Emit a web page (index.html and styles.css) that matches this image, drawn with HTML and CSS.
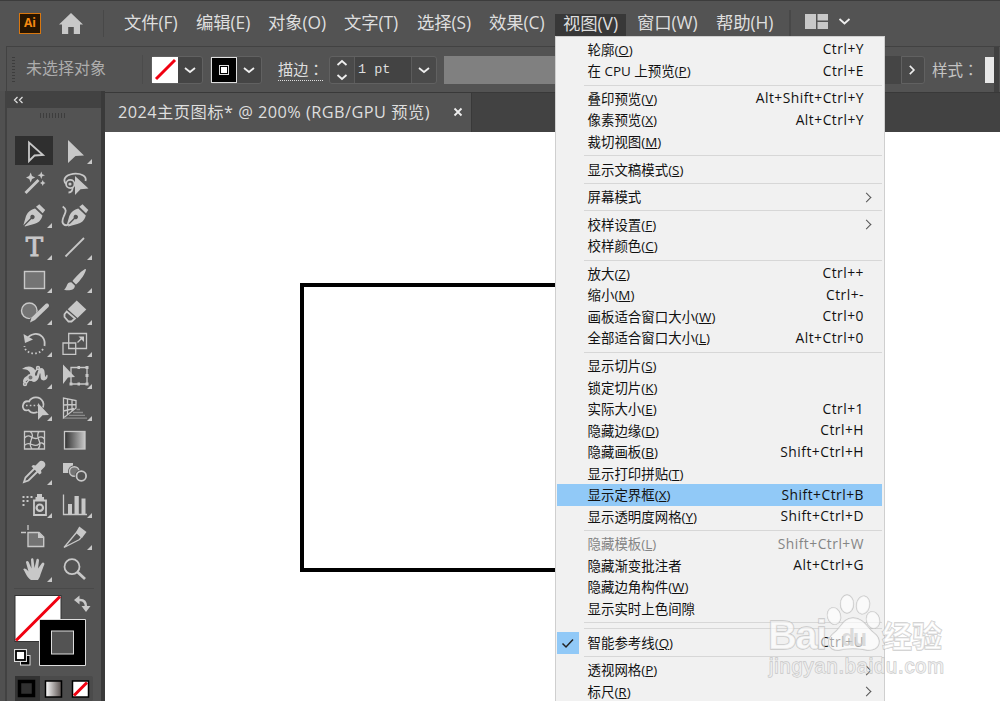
FILE: index.html
```html
<!DOCTYPE html>
<html lang="zh-CN">
<head>
  <meta charset="UTF-8">
  <meta name="viewport" content="width=device-width, initial-scale=1.0">
  <title>2024主页图标</title>
  <link rel="stylesheet" href="styles.css">
</head>
<body>
  <div class="app">
    <!-- Menu bar -->
    <header class="menubar">
      <div class="logo">Ai</div>
      <svg class="home" viewBox="0 0 24 22"><path d="M12 0L24 11.5H21V21H14.8V14H9.2V21H3V11.5H0Z"/></svg>
      <nav class="menus">
        <span>文件(F)</span>
        <span>编辑(E)</span>
        <span>对象(O)</span>
        <span>文字(T)</span>
        <span>选择(S)</span>
        <span>效果(C)</span>
        <span class="open">视图(V)</span>
        <span>窗口(W)</span>
        <span>帮助(H)</span>
      </nav>
      <svg class="workspace" viewBox="0 0 46 16"><path class="solid" d="M0 0H11V15H0ZM12.5 0H23V6.5H12.5ZM12.5 8H23V15H12.5Z"/><path class="chev" d="M34.5 5L39.5 9.5L44.500 5"/></svg>
    </header>

    <!-- Control bar -->
    <div class="controls">
      <div class="grip"></div>
      <span class="status">未选择对象</span>
      <div class="swatch">
        <svg class="chip" viewBox="0 0 26 26"><rect width="26" height="26" fill="#fff"/><path d="M4 22L23 3" stroke="#f00010" stroke-width="3"/></svg>
        <svg class="drop" viewBox="0 0 24 26"><path d="M7 11L12 15L17 11"/></svg>
      </div>
      <div class="swatch second">
        <svg class="chip" viewBox="0 0 26 26"><rect x=".5" y=".5" width="25" height="25" fill="#000" stroke="#ddd"/><rect x="8.500" y="8.500" width="9" height="9" fill="none" stroke="#ddd"/><rect x="10" y="10" width="6" height="6" fill="#fff"/></svg>
        <svg class="drop" viewBox="0 0 24 26"><path d="M7 11L12 15L17 11"/></svg>
      </div>
      <span class="stroke-label">描边<span class="colon" lang="zh-TW">：</span></span>
      <div class="weight">
        <svg class="spin" viewBox="0 0 24 26"><path d="M7.500 8L12 4L16.500 8M7.500 18L12 22L16.500 18"/></svg>
        <span class="value">1 pt</span>
        <svg class="drop" viewBox="0 0 24 26"><path d="M7 11L12 15L17 11"/></svg>
      </div>
      <div class="profile"></div>
      <svg class="more" viewBox="0 0 24 26"><path d="M8.500 8.500L13 13L8.500 17.500"/></svg>
      <span class="style-label">样式<span class="colon" lang="zh-TW">：</span></span>
      <div class="style-chip"></div>
      <div class="edge"></div>
    </div>

    <div class="workarea">
      <!-- Tools panel -->
      <aside class="tools">
        <div class="collapse"><svg viewBox="0 0 12 8"><path d="M4.500 1L1.500 4L4.500 7M9.500 1L6.500 4L9.500 7"/></svg></div>
        <div class="panel-grip"></div>
        <div class="tool-grid">
          <svg class="active" viewBox="0 0 40 32"><path class="line" d="M15 7.500V26L20.500 20.500L29 20Z"/></svg>
          <svg viewBox="0 0 40 32"><path d="M14 5L30 20.500L21.500 21L14 28Z"/><path d="M33 29H38V24Z"/></svg>

          <svg viewBox="0 0 40 32"><path class="line thick" d="M11.500 26L24.500 13"/><path d="M16.700 5.500L18 9L21.200 10.500L18 12L16.700 15.500L15.200 12L12 10.500L15.200 9ZM27.300 4.500L28.300 7.200L31 8.200L28.300 9.200L27.300 12L26.200 9.200L23.500 8.200L26.200 7.200ZM28.800 13L29.600 15L31.500 16L29.600 17L28.800 19L27.800 17L26 16L27.800 15Z"/></svg>
          <svg viewBox="0 0 40 32"><path class="line" d="M12 17C8.500 13 11 8 19 6.800C27 6 33 9 31.500 14"/><circle class="line" cx="16.300" cy="17" r="4.200"/><circle cx="16" cy="17" r="1.600"/><path class="line" d="M18.500 20C19 23 17.500 25.500 14.500 25.500"/><path d="M21 9L34.500 21.500L26.500 22.200L21 28Z"/></svg>

          <svg viewBox="0 0 40 32"><path d="M9.300 26.500L12 17C14 12.500 17 10.500 21 9.500L28.500 16.500C27 22 24 24 20 25L11 27.500L10.500 26.900L17.500 20A2.200 2.200 0 1 0 16.500 19L9.700 26Z"/><path d="M25.300 5.300L31.200 11L28.700 14.200L22 7.800Z"/><path d="M33 29H38V24Z"/></svg>
          <svg viewBox="0 0 40 32"><path class="line" d="M8.700 7.500C14 11 11 14 9.500 18C6.500 25 11 28 15.500 25"/><path d="M12.600 26.500L15.300 17C17.300 12.500 20.300 10.500 24.300 9.500L31.800 16.500C30.300 22 27.300 24 23.300 25L14.300 27.500L13.800 26.900L20.800 20A2.200 2.200 0 1 0 19.800 19L13 26Z"/><path d="M28.500 5.300L34.300 11L32 14.200L25.300 7.800Z"/></svg>

          <svg viewBox="0 0 40 32"><text x="20.300" y="25.300">T</text><path d="M33 29H38V24Z"/></svg>
          <svg viewBox="0 0 40 32"><path class="line" d="M11.500 25.500L30 7"/><path d="M33 29H38V24Z"/></svg>

          <svg viewBox="0 0 40 32"><rect class="box" x="10.500" y="7.500" width="20" height="17"/><path d="M33 29H38V24Z"/></svg>
          <svg viewBox="0 0 40 32"><path d="M32 5C29 5 21 13.500 18.500 17L22 20.500C26 17 32 9 32 5ZM17.300 18.200C12 18 13.500 23.500 10 25.500C14 27.500 21.500 26 20.800 21.500Z"/><path d="M33 29H38V24Z"/></svg>

          <svg viewBox="0 0 40 32"><circle class="box" cx="15.300" cy="14.800" r="7.800"/><path class="back" d="M15 28L35 9"/><path d="M16 26.500L17.500 21.500L31.500 8C34 6.500 36 9 34.500 11L21 24Z"/><path d="M33 29H38V24Z"/></svg>
          <svg viewBox="0 0 40 32"><path d="M22.700 4.500L32.300 13.600L23.500 22L13.700 13.200Z"/><path class="line" d="M12.700 15.500L21 22.500L17.500 25.500H14.500L10.500 21V18.200Z"/><path d="M33 29H38V24Z"/></svg>

          <svg viewBox="0 0 40 32"><path class="line" d="M13 11C16 5.500 24 4 28.500 9C31 12 31 14.500 30.500 18"/><path d="M9.500 6L11 15L19 11.500Z"/><path class="line dots" d="M29 21C26 26 17 27 12.500 22.500C11 21 10.700 20 10.500 18"/><path d="M33 29H38V24Z"/></svg>
          <svg viewBox="0 0 40 32"><path class="line thin" d="M14.700 5.500H32.500V20.500H14.700ZM9 15H21.700V26.400H9ZM23.500 14.500L27.500 10.500"/><path d="M24.500 8.500H30V14Z"/><path d="M33 29H38V24Z"/></svg>

          <svg viewBox="0 0 40 32"><path d="M8 9C13 5 19 6 21 10C22 13 20 15 22 16C24 15 23 9 27 8C32 8 30 15 31.500 17C32.500 16 32 14 33.500 15C34.500 20 29 22 27 19C26 17 27 14 26 13C25 16 25 21 20 22C17 22 17 19 14 20C11 21 12 24 9 22C9 17 13 16 16 15C17 12 14 9 8 9Z"/><path class="line thin" d="M12 24L23 9"/><circle class="box" cx="16.500" cy="17.500" r="2.700"/><circle class="box" cx="11" cy="24" r="1.500"/><circle class="box" cx="24" cy="8" r="1.500"/><path d="M33 29H38V24Z"/></svg>
          <svg viewBox="0 0 40 32"><path class="line thin" d="M17 7.500H33V24H17Z"/><path d="M15.500 22.500H18.500V25.500H15.500ZM23.500 6H26V9H23.500ZM31.500 6H34.500V9H31.500ZM31.500 14H34.500V17H31.500ZM31.500 22.500H34.500V25.500H31.500ZM23.500 22.500H26V25.500H23.500Z"/><path d="M9 4.500L21 17L14 17.500L9 24Z"/><path d="M33 29H38V24Z"/></svg>

          <svg viewBox="0 0 40 32"><path class="line" d="M23.500 20C19 22 16 20 14.500 18C10 19.500 8 16 9 13C10 9.500 13 9 15 9.500C18 4 26 4 29 10C30 12 29.500 14 29 15.500"/><path class="line thin dots" d="M12 13.500H24"/><path d="M24 11L35 23L28.500 23.300L24 28Z"/><path d="M33 29H38V24Z"/></svg>
          <svg viewBox="0 0 40 32"><path class="line thin" d="M9.500 6V26L22 16V8.500ZM13.500 7V22.500M18 8V19M9.500 13L22 12.500M9.500 19L20 16.500"/><path class="line faint" d="M22.500 17.500H26M19 20.500H29M15 23.300H31M10 26.200H33"/><path d="M33 29H38V24Z"/></svg>

          <svg viewBox="0 0 40 32"><path class="line thin" d="M10.500 7.500H30.500V25H10.500ZM10.500 14C16 8 18 17 24 14C27 12 29 13 30.500 15M11 21C16 16 20 25 25 20C27 18 29 19 30.500 21M16 7.500C23 12 12 18 18 25M25 7.500C20 14 30 18 24 25"/></svg>
          <svg viewBox="0 0 40 32"><defs><linearGradient id="fade"><stop stop-color="#303030"/><stop offset="1" stop-color="#c8c8c8"/></linearGradient></defs><rect x="10.500" y="7.500" width="20.500" height="17.500" fill="url(#fade)" stroke="#c8c8c8" stroke-width="1.300"/></svg>

          <svg viewBox="0 0 40 32"><path class="line" d="M21 12L11.500 21.500L10 26L14.500 24.500L24 15"/><path d="M19 9L21.500 9.500L25 6C28 2.500 33.500 7.500 30.500 11L27 14.500L27.500 17L25.500 18.500L17.500 10.500Z"/><path d="M33 29H38V24Z"/></svg>
          <svg viewBox="0 0 40 32"><path d="M9 7H19V17H9Z"/><circle class="gap" cx="20.300" cy="15.500" r="6.300"/><circle class="box" cx="20.300" cy="15.500" r="4.800"/><circle class="gap" cx="27.300" cy="20" r="6.500"/><circle class="line" cx="27.300" cy="20" r="4.800"/></svg>

          <svg viewBox="0 0 40 32"><path d="M8.500 7H10.500V9H8.500ZM12.500 7H14.500V9H12.500ZM16.500 7H18.500V9H16.500ZM8.500 11H10.500V13H8.500ZM12.500 11H14.500V13H12.500ZM8.500 15H10.500V17H8.500ZM23 5H28V8H30V11H21.500V8H23Z"/><path class="line" d="M20 11.500H32V26H20Z"/><circle class="line ring" cx="25.800" cy="18.700" r="3.200"/><path d="M33 29H38V24Z"/></svg>
          <svg viewBox="0 0 40 32"><path class="line thin" d="M9.500 5.500V25.500H33"/><path d="M14 15H18V26H14ZM20.500 7H24.800V26H20.500ZM27.500 9.500H31.500V26H27.500Z"/><path d="M33 29H38V24Z"/></svg>

          <svg viewBox="0 0 40 32"><path class="line thin" d="M14 4V9M7 11.500H12"/><path class="box" d="M14 11.500H25L29.700 16V25.500H14Z"/><path d="M24 11V17H30Z"/></svg>
          <svg viewBox="0 0 40 32"><path class="line thin" d="M22.500 11.500L10 26.500L25.500 18.500L27.500 16Z"/><path d="M25.300 5.500L32.500 11L28 17L22 11Z"/><path d="M33 29H38V24Z"/></svg>

          <svg viewBox="0 0 40 32"><path d="M17 27C13 25 11.500 19 9.300 16.500C10 14.500 12.500 16 14.500 18.500L12 9.500C12 7.500 14 7.500 14.700 9L17.500 15.500L17 6.500C17.500 4.500 19.300 5 19.500 6.500L20.500 15L22.500 6.500C23 5 25 5.500 25 7.500L24 15.500L28 10C29 8.500 31 10 30.300 11.500C29 14 28 18 26.500 21.500C26 24 25 25 24 27Z"/><path d="M33 29H38V24Z"/></svg>
          <svg viewBox="0 0 40 32"><circle class="line" cx="18" cy="13.700" r="7.500"/><path class="line thick" d="M23.500 19L31 26"/></svg>
        </div>

        <!-- Fill and stroke indicators -->
        <svg class="colors" viewBox="0 0 80 116">
          <path d="M0 3.500H80" stroke="#494949"/>
          <rect x="1" y="10.500" width="46" height="46" fill="#fff" stroke="#333"/>
          <path d="M2 55.500L46 11.500" stroke="#f00010" stroke-width="3"/>
          <path d="M25.500 34.500H71.500V80.500H25.500Z" fill="#000" stroke="#ddd"/>
          <rect x="37.500" y="46" width="22" height="23" fill="#535353" stroke="#ddd"/>
          <path d="M63 15H66C71 15 72 18 72 22" fill="none" stroke="#c8c8c8" stroke-width="2.500"/>
          <path d="M60 15L65.500 10.500V19.500ZM67.500 21H76.500L72 27Z" fill="#c8c8c8"/>
          <rect x="6.500" y="70.500" width="9.500" height="9.500" fill="#000" stroke="#ddd"/>
          <rect x="1.500" y="65.500" width="10" height="10" fill="#fff" stroke="#ddd" stroke-width="3"/>
          <rect x="2" y="66" width="9" height="9" fill="#fff" stroke="#000" stroke-width="1.800"/>
          <rect x="1" y="91" width="78" height="25" rx="2" fill="#4b4b4b"/>
          <rect x="1" y="91" width="25" height="25" fill="#333"/>
          <rect x="5.500" y="96.500" width="14" height="14" fill="#303030" stroke="#000" stroke-width="3.500"/>
          <rect x="31.500" y="96" width="16" height="16" fill="url(#shade)" stroke="#000" stroke-width="1.500"/>
          <rect x="58.500" y="96" width="16" height="16" fill="#fff" stroke="#000" stroke-width="1.500"/>
          <path d="M60 110.500L73 97.500" stroke="#f00010" stroke-width="3"/>
          <defs><linearGradient id="shade"><stop stop-color="#fff"/><stop offset="1" stop-color="#564e4c"/></linearGradient></defs>
        </svg>
      </aside>

      <main class="document">
        <div class="tabs">
          <div class="tab"><span class="tab-title">2024主页图标* @ 200% (RGB/GPU 预览)</span><svg viewBox="0 0 10 10"><path d="M1.500 1.500L8.500 8.500M8.500 1.500L1.500 8.500"/></svg></div>
        </div>
        <div class="canvas"><div class="artboard-rect"></div></div>
      </main>
    </div>

    <!-- View menu -->
    <ul class="dropdown">
      <li><span>轮廓(<u>O</u>)</span><kbd>Ctrl+Y</kbd></li>
      <li><span>在 CPU 上预览(<u>P</u>)</span><kbd>Ctrl+E</kbd></li>
      <li class="sep"></li>
      <li><span>叠印预览(<u>V</u>)</span><kbd>Alt+Shift+Ctrl+Y</kbd></li>
      <li><span>像素预览(<u>X</u>)</span><kbd>Alt+Ctrl+Y</kbd></li>
      <li><span>裁切视图(<u>M</u>)</span></li>
      <li class="sep"></li>
      <li><span>显示文稿模式(<u>S</u>)</span></li>
      <li class="sep"></li>
      <li class="sub"><span>屏幕模式</span></li>
      <li class="sep"></li>
      <li class="sub"><span>校样设置(<u>F</u>)</span></li>
      <li><span>校样颜色(<u>C</u>)</span></li>
      <li class="sep"></li>
      <li><span>放大(<u>Z</u>)</span><kbd>Ctrl++</kbd></li>
      <li><span>缩小(<u>M</u>)</span><kbd>Ctrl+-</kbd></li>
      <li><span>画板适合窗口大小(<u>W</u>)</span><kbd>Ctrl+0</kbd></li>
      <li><span>全部适合窗口大小(<u>L</u>)</span><kbd>Alt+Ctrl+0</kbd></li>
      <li class="sep"></li>
      <li><span>显示切片(<u>S</u>)</span></li>
      <li><span>锁定切片(<u>K</u>)</span></li>
      <li><span>实际大小(<u>E</u>)</span><kbd>Ctrl+1</kbd></li>
      <li><span>隐藏边缘(<u>D</u>)</span><kbd>Ctrl+H</kbd></li>
      <li><span>隐藏画板(<u>B</u>)</span><kbd>Shift+Ctrl+H</kbd></li>
      <li><span>显示打印拼贴(<u>T</u>)</span></li>
      <li class="hover"><span>显示定界框(<u>X</u>)</span><kbd>Shift+Ctrl+B</kbd></li>
      <li><span>显示透明度网格(<u>Y</u>)</span><kbd>Shift+Ctrl+D</kbd></li>
      <li class="sep"></li>
      <li class="disabled"><span>隐藏模板(<u>L</u>)</span><kbd>Shift+Ctrl+W</kbd></li>
      <li><span>隐藏渐变批注者</span><kbd>Alt+Ctrl+G</kbd></li>
      <li><span>隐藏边角构件(<u>W</u>)</span></li>
      <li><span>显示实时上色间隙</span></li>
      <li class="sep"></li>
      <li class="sep"></li>
      <li class="checked"><svg class="check" viewBox="0 0 22 22"><path d="M5.500 11.500L9 15L16 7.500"/></svg><span>智能参考线(<u>Q</u>)</span><kbd>Ctrl+U</kbd></li>
      <li class="sep"></li>
      <li class="sub"><span>透视网格(<u>P</u>)</span></li>
      <li class="sub"><span>标尺(<u>R</u>)</span></li>
    </ul>

    <svg class="watermark" viewBox="0 0 190 95">
      <g>
        <ellipse cx="70" cy="26" rx="6.500" ry="8.500" transform="rotate(-15 70 26)"/>
        <ellipse cx="83" cy="14" rx="6.500" ry="9"/>
        <ellipse cx="99" cy="15" rx="6.500" ry="9" transform="rotate(10 99 15)"/>
        <ellipse cx="109" cy="30" rx="6.500" ry="8.500" transform="rotate(-15 109 30)"/>
        <path d="M89 28C79 28 77 38 70 43C61 50 64 61 75 60C84 58 93 58 103 60C117 61 118 49 110 43C103 38 100 28 89 28Z"/>
      </g>
      <text class="brand" x="4" y="59" textLength="59">Bai</text>
      <text class="du" x="77" y="56" textLength="26">du</text>
      <text class="brand cn" x="118" y="57" textLength="60">经验</text>
      <text class="site" x="5" y="83" textLength="175">jingyan.baidu.com</text>
    </svg>
  </div>
</body>
</html>
```
FILE: styles.css
```css
* {
  box-sizing: border-box;
}

body {
  margin: 0;
  width: 1000px;
  height: 701px;
  overflow: hidden;
  background: #535353;
  color: #dedede;
  font-family: "Open Sans", "Noto Sans CJK SC", sans-serif;
}

svg {
  display: block;
  flex: none;
}

.app {
  position: relative;
  display: flex;
  flex-direction: column;
  width: 1000px;
  height: 701px;
  overflow: hidden;
}

/* Menu bar */
.menubar {
  display: flex;
  align-items: center;
  flex: none;
  height: 46px;
  padding-left: 19px;
  border-top: 1px solid #3c3c3c;
}

.logo {
  width: 22px;
  height: 21px;
  border: 1.5px solid #d9770f;
  background: #261400;
  color: #f58a12;
  font-size: 12px;
  font-weight: bold;
  line-height: 18px;
  text-align: center;
}

.home {
  width: 24px;
  height: 22px;
  margin-left: 18px;
  fill: #c8c8c8;
}

.menus {
  display: grid;
  grid-template-columns: 72px 72px 76px 73px 72px 74px 74px 79px 73px;
  align-items: center;
  height: 27px;
  margin-left: 20px;
  padding-left: 20px;
  border-left: 1px solid #484848;
  border-right: 2px solid #484848;
  font-size: 17.4px;
  letter-spacing: -0.1px;
  line-height: 22px;
  white-space: nowrap;
}

.menus span {
  padding-bottom: 4px;
}

.menus .open {
  width: 71px;
  height: 23px;
  margin: 4px 0 0 -8px;
  padding: 0 0 0 8px;
  background: #383838;
  line-height: 18px;
}

.workspace {
  width: 46px;
  height: 16px;
  margin: -4px 0 0 14px;
}

.workspace .solid {
  fill: #c8c8c8;
}

.workspace .chev,
.drop path,
.spin path,
.more path {
  fill: none;
  stroke: #eee;
  stroke-width: 1.8;
}

/* Control bar */
.controls {
  display: flex;
  align-items: center;
  flex: none;
  height: 46px;
  margin-left: 6px;
  border-top: 1px solid #424242;
  border-left: 1px solid #424242;
  font-size: 16px;
  white-space: nowrap;
}

.grip {
  width: 3px;
  height: 26px;
  margin-left: 5px;
  background: repeating-linear-gradient(#3d3d3d 0 1px, transparent 1px 3px);
}

.status {
  width: 117px;
  margin-left: 11px;
  padding-bottom: 5px;
  border-right: 1px solid #4b4b4b;
  color: #adadad;
}

.swatch {
  display: flex;
  width: 52px;
  height: 28px;
  margin-left: 8px;
  border: 1px solid #616161;
  border-radius: 3px;
  background: #454545;
}

.swatch.second {
  margin-left: 7px;
}

.chip {
  width: 26px;
  height: 26px;
}

.drop,
.spin,
.more {
  width: 24px;
  height: 26px;
}

.stroke-label {
  width: 45px;
  margin-left: 16px;
  border-bottom: 1px dotted #ddd;
  font-size: 15.2px;
  line-height: 21px;
}

.colon {
  font-family: "Noto Sans CJK TC", sans-serif;
}

.weight {
  display: flex;
  width: 108px;
  height: 28px;
  margin-left: 6px;
  border: 1px solid #616161;
  border-radius: 3px;
  background: #4a4a4a;
}

.value {
  width: 59px;
  padding-left: 3px;
  border-left: 1px solid #5c5c5c;
  border-right: 1px solid #5c5c5c;
  background: #434343;
  font-family: "Liberation Mono", monospace;
  font-size: 13.5px;
  line-height: 25px;
}

.profile {
  width: 457px;
  height: 28px;
  margin-left: 7px;
  background: linear-gradient(90deg, #808080 0 400px, #454545 400px);
}

.more {
  height: 28px;
  border: 1px solid #616161;
  border-radius: 0 3px 3px 0;
  background: #4a4a4a;
}

.style-label {
  width: 48px;
  margin-left: 7px;
  color: #c4c4c4;
  font-size: 15.5px;
}

.style-chip {
  width: 9px;
  height: 26px;
  margin-left: 5px;
  background: #e8e8e8;
}

.edge {
  width: 5px;
  height: 46px;
  background: #404040;
}

/* Tools panel */
.workarea {
  display: flex;
  flex: 1;
  min-height: 0;
}

.tools {
  width: 105px;
  flex: none;
  margin-top: -1px;
  padding-left: 6px;
  border-right: 4px solid #3a3a3a;
  background: linear-gradient(90deg, #505050 5px, #424242 5px 7px, #535353 7px);
}

.collapse {
  height: 17px;
  padding: 5px 0 0 7px;
  background: #424242;
}

.collapse svg {
  width: 12px;
  height: 8px;
  fill: none;
  stroke: #ddd;
  stroke-width: 1.3;
}

.panel-grip {
  width: 26px;
  height: 5px;
  margin: 5px 0 0 34px;
  background: repeating-linear-gradient(90deg, #3d3d3d 0 1px, transparent 1px 3px);
}

.tool-grid {
  display: grid;
  grid-template-columns: 40px 40px;
  grid-auto-rows: 32.15px;
  margin: 17px 0 0 8px;
}

.tool-grid svg {
  width: 40px;
  height: 32px;
  fill: #c8c8c8;
}

.tool-grid .active {
  background: linear-gradient(#2f2f2f, #2f2f2f) 1px 1px / 38px 29px no-repeat;
}

.tool-grid .line {
  fill: none;
  stroke: #c8c8c8;
  stroke-width: 1.8;
}

.tool-grid .thin {
  stroke-width: 1.3;
}

.tool-grid .faint {
  stroke: #8c8c8c;
  stroke-width: 1.3;
}

.tool-grid .ring {
  stroke-width: 2.2;
}

.tool-grid .thick {
  stroke-width: 2.8;
}

.tool-grid .dots {
  stroke-dasharray: 1.6 2.2;
}

.tool-grid .box {
  fill: #747474;
  stroke: #c8c8c8;
  stroke-width: 1.4;
}

.tool-grid .gap {
  fill: #535353;
}

.tool-grid .back {
  stroke: #535353;
  stroke-width: 6;
}

.tool-grid text {
  font-family: "DejaVu Serif", serif;
  font-size: 26px;
  stroke: #c8c8c8;
  stroke-width: 0.9;
  text-anchor: middle;
}

.colors {
  width: 80px;
  height: 116px;
  margin-left: 8px;
}

/* Document */
.document {
  display: flex;
  flex: 1;
  flex-direction: column;
}

.tabs {
  height: 40px;
  border-top: 1px solid #393939;
  background: #424242;
}

.tab {
  display: flex;
  align-items: center;
  width: 367px;
  height: 39px;
  padding: 0 8px 0 13px;
  border-right: 1px solid #393939;
  background: #535353;
  font-size: 16.3px;
  letter-spacing: 0.47px;
  white-space: nowrap;
}

.tab-title {
  padding-bottom: 4px;
}

.tab svg {
  width: 10px;
  height: 10px;
  margin: -2px 0 0 auto;
  fill: none;
  stroke: #eee;
  stroke-width: 1.8;
}

.canvas {
  flex: 1;
  padding: 151px 0 0 195px;
  background: #fff;
}

.artboard-rect {
  width: 400px;
  height: 289px;
  border: 4.5px solid #000;
}

/* View menu */
.dropdown {
  position: absolute;
  top: 36px;
  left: 555px;
  width: 330px;
  height: 680px;
  margin: 0;
  padding: 2px;
  border: 1px solid #cfcfcf;
  background: #f1f1f1;
  color: #111;
  font-size: 13.45px;
  list-style: none;
}

.dropdown li {
  display: flex;
  align-items: center;
  justify-content: space-between;
  height: 21.5px;
  padding: 0 18px 0 29.5px;
  white-space: nowrap;
}

.dropdown li span,
.dropdown kbd {
  padding-bottom: 2px;
}

.dropdown .sep {
  height: 6.15px;
  padding: 0;
}

.dropdown .sep::before {
  content: "";
  flex: 1;
  height: 1px;
  margin-left: 26px;
  background: #d7d7d7;
}

.dropdown u {
  text-underline-offset: 1px;
}

.dropdown kbd {
  font-family: inherit;
  font-size: 13.8px;
  letter-spacing: 0.5px;
}

.dropdown .hover {
  margin-left: -1px;
  padding-left: 30.5px;
  background: #91c9f7;
}

.dropdown .disabled {
  color: #858585;
}

.dropdown .sub::after {
  content: "";
  width: 6px;
  height: 6px;
  margin-right: -6px;
  border-top: 1.2px solid #555;
  border-right: 1.2px solid #555;
  transform: rotate(45deg);
}

.dropdown .checked {
  padding-left: 0;
}

.check {
  width: 22px;
  height: 22px;
  margin: 0 8.5px 0 -1px;
  background: #91c9f7;
  fill: none;
  stroke: #222;
  stroke-width: 1.5;
}

.dropdown .checked span {
  flex: 1;
}

/* Watermark */
.watermark {
  position: absolute;
  top: 590px;
  left: 764px;
  width: 190px;
  height: 95px;
  fill: rgba(255, 255, 255, 0.62);
  stroke: rgba(175, 175, 175, 0.65);
  stroke-width: 1.3;
  paint-order: stroke;
}

.brand {
  font-family: "Liberation Sans", sans-serif;
  font-size: 40px;
  font-weight: bold;
}

.du {
  fill: rgba(205, 205, 205, 0.7);
  stroke: none;
  font-family: "Liberation Sans", sans-serif;
  font-size: 23px;
  font-weight: bold;
}

.brand.cn {
  font-family: "Noto Sans CJK SC", sans-serif;
  font-size: 30px;
}

.site {
  font-family: "Liberation Sans", sans-serif;
  font-size: 20px;
}
```
